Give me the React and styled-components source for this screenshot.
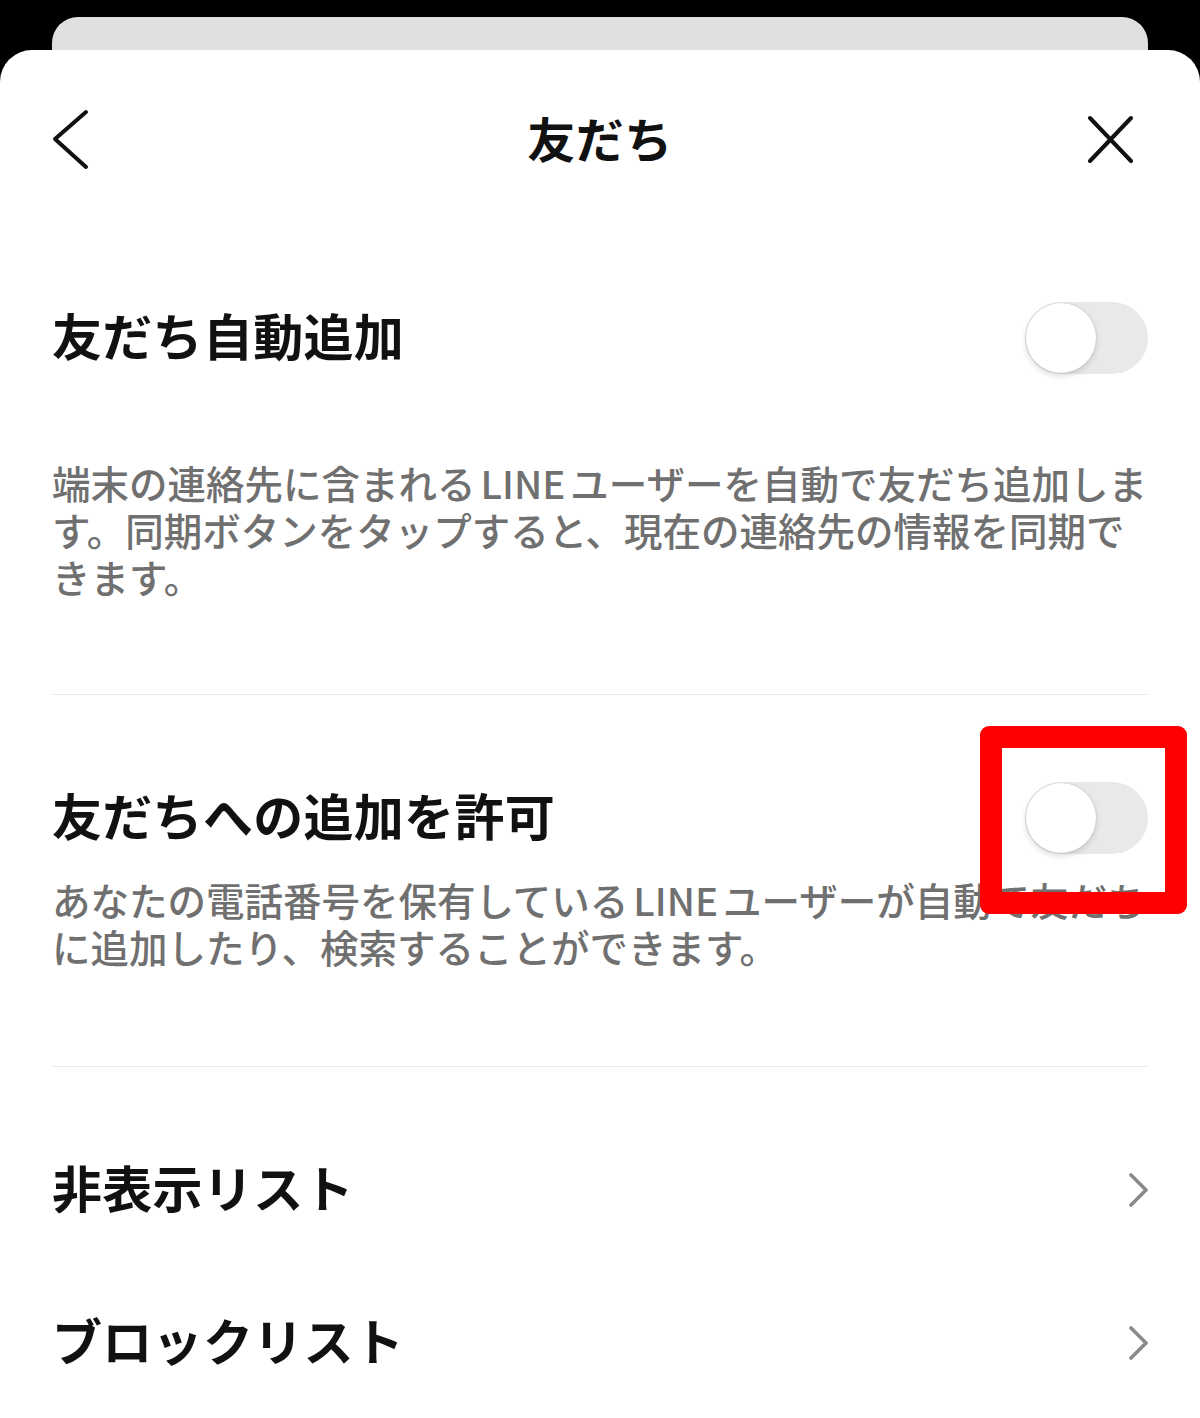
import React from "react";
import styled, { createGlobalStyle } from "styled-components";

const GlobalStyle = createGlobalStyle`
  html, body {
    margin: 0;
    padding: 0;
    background: #000;
  }
  body {
    font-family: "Noto Sans CJK JP", "Noto Sans", sans-serif;
    -webkit-font-smoothing: antialiased;
  }
`;

const Page = styled.div`
  width: 1200px;
  height: 1418px;
  overflow: hidden;
  padding-top: 17px;
  box-sizing: border-box;
  background: #000;
`;

const BackCard = styled.div`
  margin: 0 52px;
  height: 33px;
  background: #e0e0e0;
  border-radius: 26px 26px 0 0;
`;

const Sheet = styled.div`
  position: relative;
  background: #fff;
  border-radius: 32px 32px 0 0;
  height: 1368px;
`;

const Header = styled.div`
  display: flex;
  align-items: center;
  justify-content: space-between;
  height: 180px;
  padding: 0 52px;
`;

const HeaderTitle = styled.h1`
  margin: 0 0 6px;
  font-size: 48px;
  line-height: 1;
  font-weight: 700;
  color: #111;
  letter-spacing: 0.5px;
`;

const IconButton = styled.div`
  width: 60px;
  height: 60px;
  display: flex;
  align-items: center;
  justify-content: ${(p) => (p.$right ? "flex-end" : "flex-start")};
  svg {
    display: block;
  }
`;

const Section = styled.section`
  margin: 0 52px;
  padding: ${(p) => p.$pad};
  border-bottom: ${(p) => (p.$divider ? "1.5px solid #ebebeb" : "none")};
`;

const Row = styled.div`
  display: flex;
  align-items: center;
  justify-content: space-between;
  height: ${(p) => p.$h || "72px"};
`;

const RowTitle = styled.div`
  font-size: 50px;
  line-height: 1;
  padding-bottom: 8px;
  font-weight: 700;
  color: #111;
  letter-spacing: 0.3px;
`;

const Description = styled.p`
  margin: ${(p) => p.$mt} 0 0;
  font-size: 38.5px;
  line-height: 47px;
  font-weight: 500;
  color: #707070;
  white-space: nowrap;
`;

const Latin = styled.span`
  margin: 0 5px;
`;

const Track = styled.div`
  width: 123px;
  height: 72px;
  border-radius: 36px;
  background: #e9e9eb;
  padding: 1px;
  box-sizing: border-box;
  display: flex;
  align-items: center;
`;

const Knob = styled.div`
  width: 70px;
  height: 70px;
  border-radius: 50%;
  background: #fff;
  box-shadow: 0 0 0 1px rgba(0, 0, 0, 0.05), 0 3px 6px rgba(0, 0, 0, 0.15);
`;

const ListSection = styled.div`
  margin: 0 52px;
  padding-top: 46px;
`;

const Highlight = styled.div`
  position: absolute;
  left: 980px;
  top: 676px;
  width: 207px;
  height: 188px;
  border: 22px solid #ff0000;
  border-radius: 9px;
  box-sizing: border-box;
`;

const Toggle = () => (
  <Track>
    <Knob />
  </Track>
);

const Chevron = () => (
  <svg width="20" height="36" viewBox="0 0 20 36">
    <path d="M3 3 L18 18 L3 33" fill="none" stroke="#8a8a8a" strokeWidth="3.6" strokeLinecap="round" strokeLinejoin="round" />
  </svg>
);

const App = () => {
  return (
    <>
      <GlobalStyle />
      <Page>
        <BackCard />
        <Sheet>
          <Header>
            <IconButton>
              <svg width="40" height="62" viewBox="0 0 40 62">
                <path d="M34 3 L3 30 L34 58" fill="none" stroke="#111" strokeWidth="4" strokeLinecap="round" strokeLinejoin="round" />
              </svg>
            </IconButton>
            <HeaderTitle>友だち</HeaderTitle>
            <IconButton $right>
              <svg width="60" height="50" viewBox="0 0 60 50">
                <path d="M2 3 L43 46 M43 3 L2 46" fill="none" stroke="#111" strokeWidth="4" strokeLinecap="round" />
              </svg>
            </IconButton>
          </Header>

          <Section $pad="72px 0 94px" $divider>
            <Row>
              <RowTitle>友だち自動追加</RowTitle>
              <Toggle />
            </Row>
            <Description $mt="85px">
              端末の連絡先に含まれる<Latin>LINE</Latin>ユーザーを自動で友だち追加しま
              <br />
              す。同期ボタンをタップすると、現在の連絡先の情報を同期で
              <br />
              きます。
            </Description>
          </Section>

          <Section $pad="87px 0 96px" $divider>
            <Row>
              <RowTitle>友だちへの追加を許可</RowTitle>
              <Toggle />
            </Row>
            <Description $mt="22px">
              あなたの電話番号を保有している<Latin>LINE</Latin>ユーザーが自動で友だち
              <br />
              に追加したり、検索することができます。
            </Description>
          </Section>

          <ListSection>
            <Row $h="153px">
              <RowTitle>非表示リスト</RowTitle>
              <Chevron />
            </Row>
            <Row $h="153px">
              <RowTitle>ブロックリスト</RowTitle>
              <Chevron />
            </Row>
          </ListSection>

          <Highlight />
        </Sheet>
      </Page>
    </>
  );
};

export default App;
